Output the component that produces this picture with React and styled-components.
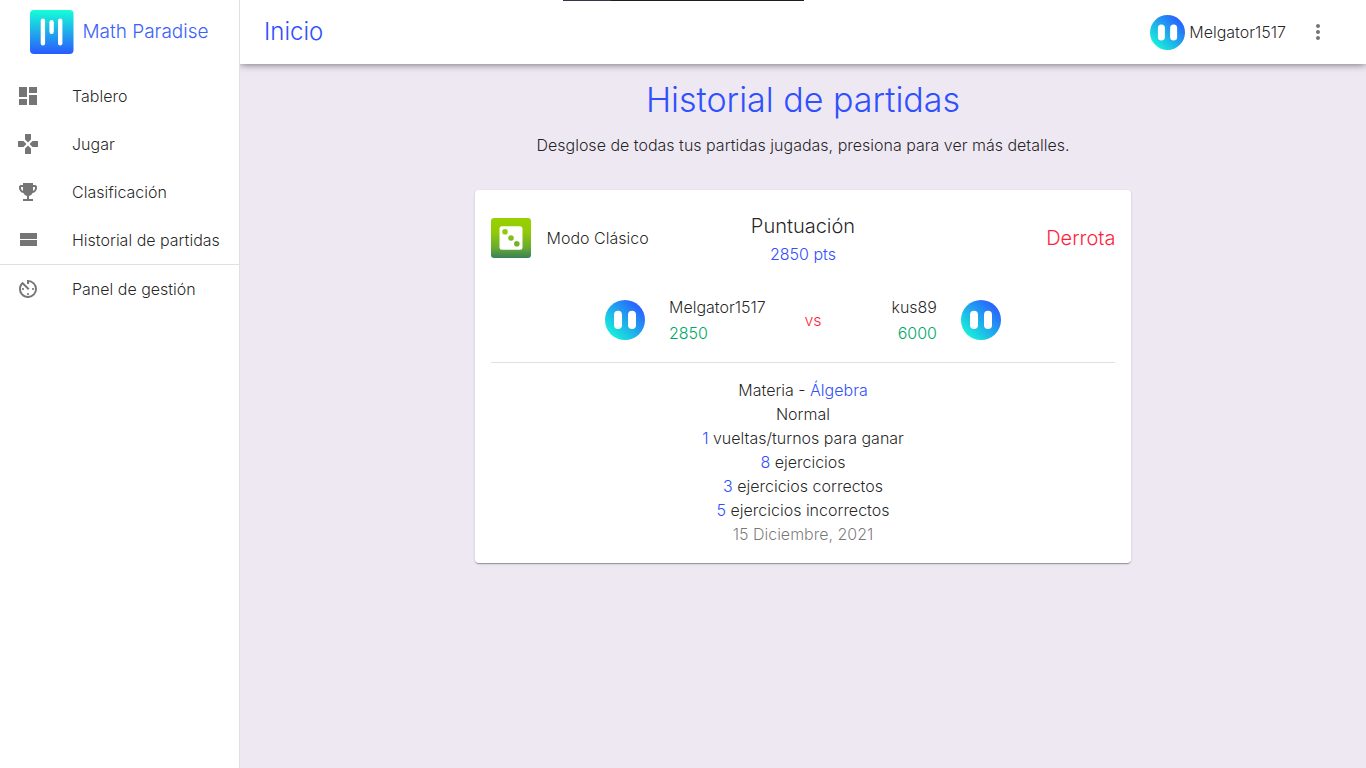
import React from "react";
import styled, { createGlobalStyle, css } from "styled-components";
import { MdDashboard, MdGames, MdEmojiEvents, MdAvTimer, MdMoreVert } from "react-icons/md";

const colors = {
  primary: "#304ffe",
  text: "rgba(0, 0, 0, 0.87)",
  muted: "rgba(0, 0, 0, 0.54)",
  danger: "#ff1f3d",
  success: "#00a968",
  divider: "#e0e0e0",
  page: "#eee8f3",
};

const GlobalStyle = createGlobalStyle`
  *, *::before, *::after { box-sizing: border-box; }
  body {
    margin: 0;
    background: ${colors.page};
    color: ${colors.text};
    font-family: Inter, "Liberation Sans", sans-serif;
    font-size: 16px;
    font-weight: 300;
    line-height: 24px;
  }
  h1, h2, p { margin: 0; font-weight: inherit; }
  a { color: inherit; text-decoration: none; }
`;

const Shell = styled.div`
  display: flex;
  min-height: 100vh;
`;

const WindowEdge = styled.div`
  position: absolute;
  z-index: 2;
  top: 0;
  left: 563px;
  width: 241px;
  height: 1px;
  background: linear-gradient(to right, #34344e 48px, #1e1e1e 48px);
`;

const Sidebar = styled.aside`
  flex: 0 0 240px;
  background: #fff;
  border-right: 1px solid ${colors.divider};
`;

const Brand = styled.a`
  display: flex;
  align-items: center;
  justify-content: center;
  gap: 8px;
  height: 64px;
  color: #3a62fb;
  font-size: 19px;
`;

const NavList = styled.ul`
  list-style: none;
  margin: 0;
  padding: ${(p) => (p.$first ? "8px 0 0" : "0")};
  ${(p) =>
    !p.$first &&
    css`
      border-top: 1px solid ${colors.divider};
    `}
`;

const NavLink = styled.a`
  display: flex;
  align-items: center;
  gap: 32px;
  height: 48px;
  padding: 0 16px;
  white-space: nowrap;

  svg {
    flex: none;
    color: #757575;
  }
`;

const Page = styled.div`
  flex: 1;
  min-width: 0;
`;

const TopBar = styled.header`
  display: flex;
  align-items: center;
  justify-content: space-between;
  height: 64px;
  padding: 0 24px;
  background: #fff;
  box-shadow: 0 0 8px rgba(0, 0, 0, 0.6);
  clip-path: inset(0 0 -16px 0);
`;

const PageName = styled.span`
  color: ${colors.primary};
  font-size: 24px;
  line-height: 32px;
`;

const Account = styled.div`
  display: flex;
  align-items: center;
  gap: 8px;
`;

const AccountLink = styled.a`
  display: flex;
  align-items: center;
  gap: 4px;
`;

const IconButton = styled.button`
  display: grid;
  place-items: center;
  width: 48px;
  height: 48px;
  padding: 0;
  border: 0;
  border-radius: 50%;
  background: none;
  color: #757575;
  cursor: pointer;
`;

const Content = styled.main`
  display: flex;
  flex-direction: column;
  align-items: center;
  padding: 16px 0;
`;

const Title = styled.h1`
  color: ${colors.primary};
  font-size: 34px;
  line-height: 40px;
`;

const Subtitle = styled.p`
  margin: 13px 0 33px;
`;

const MatchCard = styled.article`
  width: calc(100% * 7 / 12);
  padding: 20px 16px 16px;
  border-radius: 4px;
  background: #fff;
  box-shadow: 0 2px 1px -1px rgba(0, 0, 0, 0.2), 0 1px 1px rgba(0, 0, 0, 0.14),
    0 1px 3px rgba(0, 0, 0, 0.12);
`;

const Summary = styled.div`
  display: grid;
  grid-template-columns: 1fr auto 1fr;
  align-items: center;
`;

const Mode = styled.div`
  display: flex;
  align-items: center;
  gap: 16px;
`;

const Score = styled.div`
  text-align: center;
`;

const ScoreTitle = styled.h2`
  font-size: 20px;
  line-height: 32px;
`;

const Outcome = styled.p`
  color: ${colors.danger};
  font-size: 20px;
  line-height: 32px;
  text-align: right;
`;

const Versus = styled.div`
  display: flex;
  align-items: center;
  width: 396px;
  margin: 29px auto 17px;
`;

const Player = styled.div`
  display: flex;
  align-items: center;
  gap: 24px;
  flex: ${(p) => (p.$end ? "1" : "0 0 184px")};
  justify-content: ${(p) => (p.$end ? "flex-end" : "flex-start")};
  text-align: ${(p) => (p.$end ? "right" : "left")};
`;

const PlayerInfo = styled.div`
  display: grid;
  gap: 2px;
`;

const VersusMark = styled.span`
  flex: 0 0 48px;
  color: ${colors.danger};
  text-align: center;
`;

const Details = styled.div`
  padding: 15px 0 1px;
  border-top: 1px solid ${colors.divider};
  text-align: center;
`;

const Tint = styled.span`
  color: ${(p) => colors[p.$tone]};
`;

function Logo() {
  return (
    <svg width="44" height="44" viewBox="0 0 44 44" aria-hidden="true">
      <defs>
        <linearGradient id="logo" x1="0" y1="0" x2="0" y2="1">
          <stop offset="0" stopColor="#14ffd8" />
          <stop offset="1" stopColor="#2b59ff" />
        </linearGradient>
      </defs>
      <rect width="43.5" height="44" rx="4" fill="url(#logo)" />
      <g fill="#fff">
        <rect x="10.7" y="8.5" width="4.4" height="27" rx="2.2" />
        <rect x="19.4" y="10" width="4.4" height="14" rx="2.2" />
        <rect x="28" y="8.5" width="4.4" height="27" rx="2.2" />
      </g>
    </svg>
  );
}

function Avatar({ size = 40, id }) {
  return (
    <svg width={size} height={size} viewBox="0 0 40 40" aria-hidden="true">
      <defs>
        <linearGradient id={id} x1="0.15" y1="0.85" x2="0.85" y2="0.15">
          <stop offset="0" stopColor="#17eddb" />
          <stop offset="1" stopColor="#2962ff" />
        </linearGradient>
      </defs>
      <circle cx="20" cy="20" r="20" fill={`url(#${id})`} />
      <rect x="9" y="10.8" width="8" height="18.2" rx="4" fill="#fff" />
      <rect x="23" y="10.8" width="8" height="18.2" rx="4" fill="#fff" />
    </svg>
  );
}

function DiceIcon() {
  return (
    <svg width="40" height="40" viewBox="0 0 40 40" aria-hidden="true">
      <defs>
        <linearGradient id="dice" gradientUnits="userSpaceOnUse" x1="0" y1="0" x2="0" y2="40">
          <stop offset="0" stopColor="#99d000" />
          <stop offset="0.35" stopColor="#92cb07" />
          <stop offset="0.75" stopColor="#68aa2f" />
          <stop offset="1" stopColor="#37805a" />
        </linearGradient>
      </defs>
      <rect width="40" height="40" rx="3" fill="url(#dice)" />
      <rect x="8.5" y="8.3" width="23" height="23.5" rx="2.5" fill="#fff" />
      <g fill="url(#dice)">
        <circle cx="14" cy="13.8" r="2.8" />
        <circle cx="20" cy="20" r="2.8" />
        <circle cx="25.8" cy="25.7" r="2.8" />
      </g>
    </svg>
  );
}

function StreamIcon({ size }) {
  return (
    <svg width={size} height={size} viewBox="0 0 24 24" fill="currentColor" aria-hidden="true">
      <path d="M4 18h17v-6H4v6zM4 5v6h17V5H4z" />
    </svg>
  );
}

const mainLinks = [
  { label: "Tablero", icon: MdDashboard },
  { label: "Jugar", icon: MdGames },
  { label: "Clasificación", icon: MdEmojiEvents },
  { label: "Historial de partidas", icon: StreamIcon },
];
const adminLinks = [{ label: "Panel de gestión", icon: MdAvTimer }];

function NavGroup({ links, first }) {
  return (
    <NavList $first={first}>
      {links.map(({ label, icon: Icon }) => (
        <li key={label}>
          <NavLink href="#">
            <Icon size={24} />
            {label}
          </NavLink>
        </li>
      ))}
    </NavList>
  );
}

const counts = [
  [1, "vueltas/turnos para ganar"],
  [8, "ejercicios"],
  [3, "ejercicios correctos"],
  [5, "ejercicios incorrectos"],
];

export default function App() {
  return (
    <>
      <GlobalStyle />
      <WindowEdge />
      <Shell>
        <Sidebar>
          <Brand href="#">
            <Logo />
            Math Paradise
          </Brand>
          <nav>
            <NavGroup links={mainLinks} first />
            <NavGroup links={adminLinks} />
          </nav>
        </Sidebar>
        <Page>
          <TopBar>
            <PageName>Inicio</PageName>
            <Account>
              <AccountLink href="#">
                <Avatar size={35} id="avatar-account" />
                Melgator1517
              </AccountLink>
              <IconButton type="button" aria-label="Más opciones">
                <MdMoreVert size={24} />
              </IconButton>
            </Account>
          </TopBar>
          <Content>
            <Title>Historial de partidas</Title>
            <Subtitle>Desglose de todas tus partidas jugadas, presiona para ver más detalles.</Subtitle>
            <MatchCard>
              <Summary>
                <Mode>
                  <DiceIcon />
                  Modo Clásico
                </Mode>
                <Score>
                  <ScoreTitle>Puntuación</ScoreTitle>
                  <Tint $tone="primary">2850 pts</Tint>
                </Score>
                <Outcome>Derrota</Outcome>
              </Summary>
              <Versus>
                <Player>
                  <Avatar id="avatar-home" />
                  <PlayerInfo>
                    <span>Melgator1517</span>
                    <Tint $tone="success">2850</Tint>
                  </PlayerInfo>
                </Player>
                <VersusMark>vs</VersusMark>
                <Player $end>
                  <PlayerInfo>
                    <span>kus89</span>
                    <Tint $tone="success">6000</Tint>
                  </PlayerInfo>
                  <Avatar id="avatar-rival" />
                </Player>
              </Versus>
              <Details>
                <p>
                  Materia - <Tint $tone="primary">Álgebra</Tint>
                </p>
                <p>Normal</p>
                {counts.map(([n, label]) => (
                  <p key={label}>
                    <Tint $tone="primary">{n}</Tint> {label}
                  </p>
                ))}
                <p>
                  <Tint $tone="muted">15 Diciembre, 2021</Tint>
                </p>
              </Details>
            </MatchCard>
          </Content>
        </Page>
      </Shell>
    </>
  );
}
